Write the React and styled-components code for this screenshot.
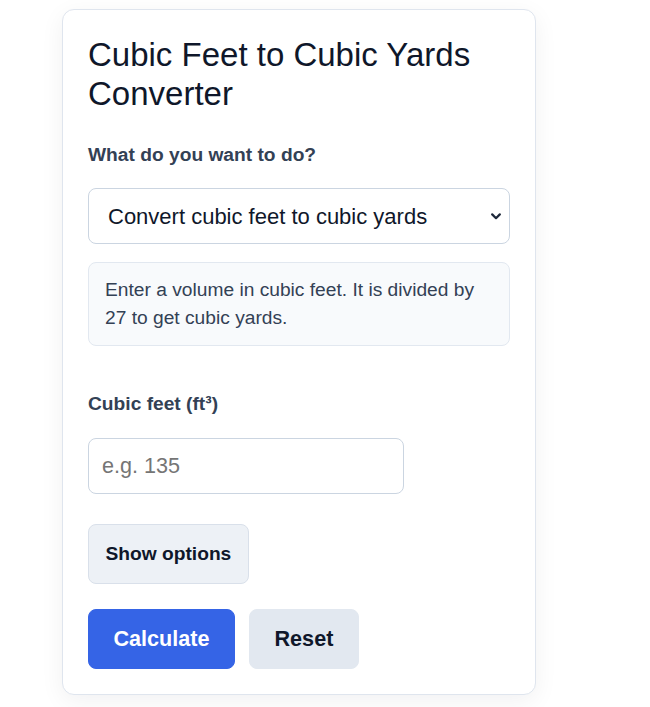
import { useState } from "react";
import styled, { createGlobalStyle } from "styled-components";

const GlobalStyle = createGlobalStyle`
  * { box-sizing: border-box; }
  body {
    margin: 0;
    background: #ffffff;
    font-family: "Liberation Sans", Arial, sans-serif;
    color: #0f172a;
  }
`;

const Page = styled.div`
  padding: 9px 0 12px 62px;
`;

const Card = styled.div`
  width: 474px;
  background: #ffffff;
  border: 1px solid #dfe5ee;
  border-radius: 12px;
  padding: 26px 25px 25px;
  box-shadow: 0 6px 24px rgba(15, 23, 42, 0.06);
`;

const Title = styled.h1`
  margin: 0 0 30px;
  font-size: 33px;
  line-height: 1.18;
  font-weight: 400;
  color: #0f172a;
`;

const Label = styled.label`
  display: block;
  font-size: 19.2px;
  font-weight: 700;
  color: #334155;
  margin-bottom: 22.5px;
`;

const SelectWrap = styled.div`
  position: relative;
`;

const Select = styled.select`
  display: block;
  width: 100%;
  height: 56px;
  padding: 0 32px 0 19px;
  appearance: none;
  font-family: inherit;
  font-size: 22px;
  color: #0f172a;
  background: #ffffff;
  border: 1px solid #cbd5e1;
  border-radius: 8px;
`;

const Caret = styled.svg`
  position: absolute;
  right: 9px;
  top: 50%;
  margin-top: -3px;
  pointer-events: none;
`;

const Hint = styled.p`
  margin: 18px 0 0;
  padding: 13px 16px;
  background: #f8fafc;
  border: 1px solid #e2e8f0;
  border-radius: 8px;
  font-size: 19.2px;
  line-height: 28px;
  color: #334155;
`;

const Field = styled.div`
  margin-top: ${(p) => p.$top}px;
`;

const Input = styled.input`
  display: block;
  width: 316px;
  height: 56px;
  padding: 0 13px;
  font-family: inherit;
  font-size: 21.6px;
  color: #0f172a;
  border: 1px solid #cbd5e1;
  border-radius: 8px;
  &::placeholder { color: #757575; }
`;

const Button = styled.button`
  height: 60px;
  padding: 0 ${(p) => p.$pad}px;
  font-family: inherit;
  font-size: ${(p) => p.$size}px;
  font-weight: 700;
  border-radius: 8px;
  cursor: pointer;
  color: ${(p) => (p.$primary ? "#ffffff" : "#0f172a")};
  background: ${(p) => p.$bg};
  border: 1px solid ${(p) => p.$border || p.$bg};
`;

const OptionsRow = styled.div`
  margin-top: 30px;
`;

const Actions = styled.div`
  display: flex;
  gap: 14px;
  margin-top: 25px;
`;

export default function App() {
  const [mode, setMode] = useState("ft3-yd3");
  const [value, setValue] = useState("");

  return (
    <Page>
      <GlobalStyle />
      <Card>
        <Title>Cubic Feet to Cubic Yards Converter</Title>
        <Label htmlFor="mode">What do you want to do?</Label>
        <SelectWrap>
          <Select id="mode" value={mode} onChange={(e) => setMode(e.target.value)}>
            <option value="ft3-yd3">Convert cubic feet to cubic yards</option>
            <option value="yd3-ft3">Convert cubic yards to cubic feet</option>
          </Select>
          <Caret width="10" height="7" viewBox="0 0 10 7" fill="none">
            <path
              d="M1.2 1.4 5 5.2l3.8-3.8"
              stroke="#1e293b"
              strokeWidth="2.2"
              strokeLinecap="round"
              strokeLinejoin="round"
            />
          </Caret>
        </SelectWrap>
        <Hint>Enter a volume in cubic feet. It is divided by 27 to get cubic yards.</Hint>

        <Field $top={47}>
          <Label htmlFor="ft3">Cubic feet (ft³)</Label>
          <Input
            id="ft3"
            type="text"
            placeholder="e.g. 135"
            value={value}
            onChange={(e) => setValue(e.target.value)}
          />
        </Field>

        <OptionsRow>
          <Button $size={19.2} $pad={16.5} $bg="#edf1f6" $border="#d9e0ea">
            Show options
          </Button>
        </OptionsRow>

        <Actions>
          <Button $primary $size={21.6} $pad={24.5} $bg="#3564e6">
            Calculate
          </Button>
          <Button $size={21.6} $pad={24.5} $bg="#e2e8f0">
            Reset
          </Button>
        </Actions>
      </Card>
    </Page>
  );
}
